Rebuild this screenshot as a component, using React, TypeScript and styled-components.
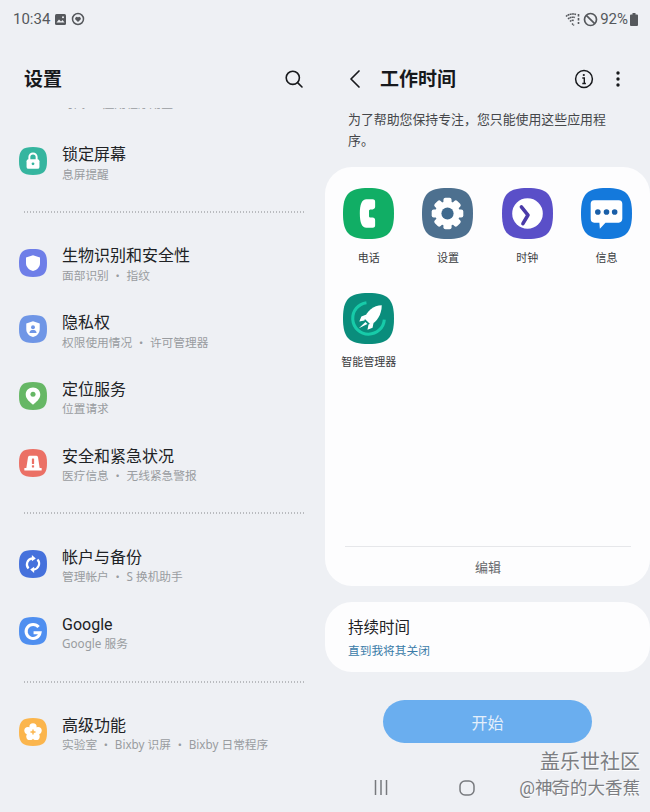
import React from "react";
import styled, { createGlobalStyle } from "styled-components";

const Global = createGlobalStyle`
  html, body { margin: 0; padding: 0; background: #eef0f4; }
  body { font-family: Roboto, "Noto Sans CJK SC", sans-serif; width: 650px; height: 812px; overflow: hidden; }
`;

const Screen = styled.div`
  position: relative;
  width: 650px;
  height: 812px;
  display: grid;
  grid-template-columns: 325px 325px;
  background: #eef0f4;
  overflow: hidden;
`;

const Pane = styled.section`
  display: flex;
  flex-direction: column;
  min-width: 0;
`;

const StatusBar = styled.div<{ $right?: boolean }>`
  height: 38px;
  box-sizing: border-box;
  display: flex;
  align-items: center;
  justify-content: ${(p) => (p.$right ? "flex-end" : "flex-start")};
  padding: 0 ${(p) => (p.$right ? "12px" : "0")} 0 ${(p) => (p.$right ? "0" : "13px")};
  gap: ${(p) => (p.$right ? "2px" : "4px")};
  color: #55585c;
  font-size: 15px;
  line-height: 20px;
`;

const Header = styled.header`
  height: 70px;
  display: flex;
  align-items: center;
  box-sizing: border-box;
  padding-top: 12px;
  position: relative;
`;

const LeftHeader = styled(Header)`
  padding-left: 24px;
  padding-right: 21px;
  justify-content: space-between;
`;

const RightHeader = styled(Header)`
  padding-left: 21px;
  padding-right: 30px;
`;

const Title = styled.h1`
  margin: 2px 0 0;
  font-size: 19px;
  line-height: 26px;
  font-weight: 700;
  color: #17191c;
`;

const PageTitle = styled(Title)`
  margin-left: 16px;
`;

const HeaderSpacer = styled.div`
  flex: 1;
`;

const IconGlyph = styled.svg<{ $ml?: number }>`
  display: block;
  flex: none;
  margin-left: ${(p) => p.$ml ?? 0}px;
`;

const ScrollList = styled.div`
  height: 704px;
  overflow: hidden;
  display: flex;
  flex-direction: column;
`;

const ClippedSub = styled.div`
  height: 20px;
  margin-top: -14px;
  padding-left: 62px;
  font-size: 11.7px;
  line-height: 20px;
  color: #999ca0;
  flex: none;
`;

const ListGap = styled.div`
  height: 14px;
  flex: none;
`;

const Row = styled.div`
  height: 66.7px;
  flex: none;
  display: flex;
  align-items: center;
  padding-left: 19px;
  gap: 15px;
`;

const RowText = styled.div`
  display: flex;
  flex-direction: column;
  padding-top: 6px;
`;

const RowTitle = styled.div`
  font-size: 16px;
  line-height: 20px;
  color: #202225;
`;

const RowSub = styled.div`
  font-family: "Noto Sans", "Noto Sans CJK SC", sans-serif;
  font-size: 11.7px;
  line-height: 20px;
  margin-top: -1.5px;
  color: #999ca0;
`;

const Divider = styled.div`
  height: 34.7px;
  flex: none;
  margin: 0 21px 0 24px;
  display: flex;
  align-items: center;
  &::before {
    content: "";
    flex: 1;
    height: 2px;
    background: repeating-linear-gradient(90deg, #b9bbbf 0 1.5px, transparent 1.5px 3px);
  }
`;

const Intro = styled.p`
  margin: 0;
  padding: 1px 40px 0 23px;
  height: 58px;
  font-size: 12.9px;
  line-height: 21px;
  color: #45474a;
`;

const Card = styled.div`
  background: #fdfdfe;
  border-radius: 27px;
`;

const AppsCard = styled(Card)`
  height: 419px;
  display: flex;
  flex-direction: column;
  box-sizing: border-box;
  padding-top: 21px;
`;

const AppGrid = styled.div`
  flex: 1;
  display: grid;
  grid-template-columns: repeat(4, 79.3px);
  grid-auto-rows: 104.5px;
  padding-left: 4px;
`;

const AppCell = styled.div`
  display: flex;
  flex-direction: column;
  align-items: center;
  gap: 11.5px;
`;

const AppLabel = styled.div`
  font-size: 11px;
  line-height: 16px;
  color: #3a3c3f;
  white-space: nowrap;
`;

const EditBar = styled.div`
  height: 39px;
  margin: 0 19px 0 20px;
  border-top: 1px solid #e6e7ea;
  display: flex;
  align-items: center;
  justify-content: center;
  font-size: 13px;
  color: #66686c;
`;

const DurationCard = styled(Card)`
  margin-top: 16px;
  height: 70px;
  box-sizing: border-box;
  padding: 15px 23px 0;
`;

const DurationTitle = styled.div`
  font-size: 15.5px;
  line-height: 22px;
  color: #202225;
`;

const DurationValue = styled.div`
  font-size: 11.7px;
  line-height: 18px;
  margin-top: 3px;
  color: #3a7ba8;
`;

const StartButton = styled.button`
  display: flex;
  align-items: center;
  justify-content: center;
  width: 209px;
  height: 43px;
  margin: 28px 0 0 58px;
  padding: 0;
  border: 0;
  border-radius: 22px;
  background: #6aaeef;
  color: #e4effb;
  font: inherit;
  font-size: 16px;
`;

const NavBar = styled.nav`
  flex: 1;
  position: relative;
  display: flex;
  align-items: flex-start;
  padding: 37px 0 0 49px;
  gap: 71px;
`;

const Watermark = styled.div`
  position: absolute;
  right: 10px;
  bottom: 11px;
  text-align: right;
  color: #7c7e82;
  text-shadow: 1px 1px 0 rgba(255, 255, 255, 0.85);
`;

const WatermarkBrand = styled.div`
  font-size: 20px;
  line-height: 26px;
`;

const WatermarkUser = styled.div`
  font-size: 17.5px;
  line-height: 26px;
`;

const SQ = "M50 0C88 0 100 12 100 50C100 88 88 100 50 100C12 100 0 88 0 50C0 12 12 0 50 0Z";

const Tile = ({ size, fill, children }: { size: number; fill: string; children: React.ReactNode }) => (
  <IconGlyph width={size} height={size} viewBox="0 0 100 100">
    <path d={SQ} fill={fill} />
    {children}
  </IconGlyph>
);

const LockIcon = () => (
  <Tile size={28} fill="#35b59f">
    <path d="M37 46V36a13 13 0 0 1 26 0v10" fill="none" stroke="#fff" strokeWidth="7" />
    <rect x="27" y="44" width="46" height="34" rx="7" fill="#fff" />
    <circle cx="50" cy="60" r="5" fill="#35b59f" />
  </Tile>
);

const ShieldIcon = () => (
  <Tile size={28} fill="#6e7ee8">
    <path d="M50 22l25 8v20c0 15-11 25-25 29-14-4-25-14-25-29V30z" fill="#fff" />
  </Tile>
);

const PrivacyIcon = () => (
  <Tile size={28} fill="#6f96e6">
    <path d="M50 22l24 8v20c0 15-10 25-24 29-14-4-24-14-24-29V30z" fill="#fff" />
    <circle cx="50" cy="44" r="7" fill="#6f96e6" />
    <path d="M37 64c1-8 7-10 13-10s12 2 13 10z" fill="#6f96e6" />
  </Tile>
);

const PinIcon = () => (
  <Tile size={28} fill="#66b765">
    <path d="M50 20c15 0 26 11 26 25 0 16-16 28-26 36-10-8-26-20-26-36 0-14 11-25 26-25z" fill="#fff" />
    <circle cx="50" cy="44" r="9" fill="#66b765" />
  </Tile>
);

const AlertIcon = () => (
  <Tile size={28} fill="#eb7065">
    <path d="M38 24h24c4 0 5 3 6 6l6 40H26l6-40c1-3 2-6 6-6z" fill="#fff" />
    <rect x="19" y="68" width="62" height="9" rx="2" fill="#fff" />
    <rect x="46" y="34" width="8" height="20" rx="2" fill="#eb7065" />
    <rect x="46" y="58" width="8" height="8" rx="2" fill="#eb7065" />
  </Tile>
);

const SyncIcon = () => (
  <Tile size={28} fill="#4571dc">
    <path d="M34 66c-11-12-6-33 14-36" fill="none" stroke="#fff" strokeWidth="8" />
    <path d="M46 18l14 12-14 10z" fill="#fff" />
    <path d="M66 34c11 12 6 33-14 36" fill="none" stroke="#fff" strokeWidth="8" />
    <path d="M54 82L40 70l14-10z" fill="#fff" />
  </Tile>
);

const GoogleIcon = () => (
  <Tile size={28} fill="#4f8ff0">
    <path d="M70 36a25 25 0 1 0 5 20H52" fill="none" stroke="#fff" strokeWidth="11" />
  </Tile>
);

const FlowerIcon = () => (
  <Tile size={28} fill="#fbb54c">
    <g fill="#fff">
      <circle cx="50" cy="32" r="13" />
      <circle cx="68" cy="45" r="13" />
      <circle cx="61" cy="66" r="13" />
      <circle cx="39" cy="66" r="13" />
      <circle cx="32" cy="45" r="13" />
      <circle cx="50" cy="50" r="15" />
    </g>
    <path d="M50 41v18M41 50h18" stroke="#fbb54c" strokeWidth="5" />
  </Tile>
);

const PhoneApp = () => (
  <Tile size={51} fill="#11ae65">
    <path
      d="M46 22h12c4 0 5 2 5 5v10c0 3-2 5-5 5h-3c-3 0-4 1-4 3v10c0 2 1 3 4 3h3c3 0 5 2 5 5v10c0 3-1 5-5 5H46c-9 0-13-10-13-28s4-28 13-28z"
      fill="#fff"
    />
  </Tile>
);

const gearTeeth = [0, 45, 90, 135, 180, 225, 270, 315];

const SettingsApp = () => (
  <Tile size={51} fill="#4d708f">
    <g fill="#fff">
      {gearTeeth.map((a) => (
        <rect key={a} x="42" y="19" width="16" height="16" rx="4" transform={`rotate(${a} 50 50)`} />
      ))}
      <circle cx="50" cy="50" r="24" />
    </g>
    <circle cx="50" cy="50" r="12" fill="#3f6a8e" />
  </Tile>
);

const ClockApp = () => (
  <Tile size={51} fill="#5a4fc8">
    <circle cx="50" cy="50" r="30" fill="#fff" />
    <path d="M38 37l13 16-10 17" fill="none" stroke="#4a3aa8" strokeWidth="7" strokeLinecap="round" strokeLinejoin="round" />
  </Tile>
);

const MessageApp = () => (
  <Tile size={51} fill="#1479dc">
    <path d="M26 24h48c5 0 7 3 7 7v29c0 5-3 8-7 8H48L37 80l-1-12H26c-5 0-7-3-7-8V31c0-4 2-7 7-7z" fill="#fff" />
    <g fill="#1a5fa8">
      <circle cx="33" cy="47" r="5.5" />
      <circle cx="50" cy="47" r="5.5" />
      <circle cx="66" cy="47" r="5.5" />
    </g>
  </Tile>
);

const CareApp = () => (
  <Tile size={51} fill="#0a8d7c">
    <path d="M81 52A31 31 0 1 1 46 19" fill="none" stroke="#17cba9" strokeWidth="6" />
    <path d="M76 24C60 24 46 36 42 50L54 62C66 58 76 42 76 24Z" fill="#fff" />
    <path d="M46 42L36 46L32 56L42 54ZM60 58L58 68L48 72L50 62Z" fill="#fff" />
    <path d="M31 69L44 57L48 61Z" fill="#fff" />
  </Tile>
);

const rows1 = [{ icon: <LockIcon />, title: "锁定屏幕", sub: "息屏提醒" }];
const rows2 = [
  { icon: <ShieldIcon />, title: "生物识别和安全性", sub: "面部识别 ・ 指纹" },
  { icon: <PrivacyIcon />, title: "隐私权", sub: "权限使用情况 ・ 许可管理器" },
  { icon: <PinIcon />, title: "定位服务", sub: "位置请求" },
  { icon: <AlertIcon />, title: "安全和紧急状况", sub: "医疗信息 ・ 无线紧急警报" },
];
const rows3 = [
  { icon: <SyncIcon />, title: "帐户与备份", sub: "管理帐户 ・ S 换机助手" },
  { icon: <GoogleIcon />, title: "Google", sub: "Google 服务" },
];
const rows4 = [{ icon: <FlowerIcon />, title: "高级功能", sub: "实验室 ・ Bixby 识屏 ・ Bixby 日常程序" }];

const apps = [
  { icon: <PhoneApp />, name: "电话" },
  { icon: <SettingsApp />, name: "设置" },
  { icon: <ClockApp />, name: "时钟" },
  { icon: <MessageApp />, name: "信息" },
  { icon: <CareApp />, name: "智能管理器" },
];

const renderRows = (rows: { icon: React.ReactNode; title: string; sub: string }[]) =>
  rows.map((r) => (
    <Row key={r.title}>
      {r.icon}
      <RowText>
        <RowTitle>{r.title}</RowTitle>
        <RowSub>{r.sub}</RowSub>
      </RowText>
    </Row>
  ));

export default function App() {
  return (
    <Screen>
      <Global />
      <Pane>
        <StatusBar>
          <span>10:34</span>
          <IconGlyph width="13" height="13" viewBox="0 0 13 13">
            <rect x="1" y="1" width="11" height="11" rx="1.5" fill="#55585c" />
            <path d="M2.500 9.500l2.500-3 2 2 1.500-1.500 2 2.500z" fill="#eef0f4" />
            <circle cx="9" cy="4.200" r="1" fill="#eef0f4" />
          </IconGlyph>
          <IconGlyph width="14" height="14" viewBox="0 0 14 14">
            <circle cx="7" cy="7" r="5.500" fill="none" stroke="#55585c" strokeWidth="1.500" />
            <path d="M7 10L4.200 7.200a1.700 1.700 0 0 1 2.800-1.800 1.700 1.700 0 0 1 2.800 1.800z" fill="#55585c" />
          </IconGlyph>
        </StatusBar>
        <LeftHeader>
          <Title>设置</Title>
          <IconGlyph width="20" height="20" viewBox="0 0 20 20">
            <circle cx="8.800" cy="8.800" r="6.600" fill="none" stroke="#17191c" strokeWidth="1.600" />
            <path d="M13.600 13.600L18 18" stroke="#17191c" strokeWidth="1.600" strokeLinecap="round" />
          </IconGlyph>
        </LeftHeader>
        <ScrollList>
          <ClippedSub>时间 ・ 应用程序用量</ClippedSub>
          <ListGap />
          {renderRows(rows1)}
          <Divider />
          {renderRows(rows2)}
          <Divider />
          {renderRows(rows3)}
          <Divider />
          {renderRows(rows4)}
        </ScrollList>
      </Pane>
      <Pane>
        <StatusBar $right>
          <IconGlyph width="16" height="14" viewBox="0 0 16 14">
            <path d="M1 4.500a10 10 0 0 1 10-2M3 7a7 7 0 0 1 7-1.500M5 9.500a4 4 0 0 1 4-1M7 11.500l2 2" fill="none" stroke="#55585c" strokeWidth="1.500" strokeDasharray="1.800 0.400" />
            <path d="M13.500 2v2.500M13.500 6v2.500M13.500 10v2" stroke="#55585c" strokeWidth="1.600" />
          </IconGlyph>
          <IconGlyph width="15" height="15" viewBox="0 0 15 15">
            <circle cx="7.500" cy="7.500" r="6" fill="none" stroke="#55585c" strokeWidth="1.700" />
            <path d="M3.300 3.300l8.400 8.400" stroke="#55585c" strokeWidth="1.700" />
          </IconGlyph>
          <span>92%</span>
          <IconGlyph width="8" height="13" viewBox="0 0 8 13">
            <path d="M2.500 0h3v1.500H7a1 1 0 0 1 1 1V12a1 1 0 0 1-1 1H1a1 1 0 0 1-1-1V2.500a1 1 0 0 1 1-1h1.500z" fill="#55585c" />
          </IconGlyph>
        </StatusBar>
        <RightHeader>
          <IconGlyph width="18" height="20" viewBox="0 0 18 20">
            <path d="M13 2L5 10l8 8" fill="none" stroke="#17191c" strokeWidth="1.700" strokeLinecap="round" strokeLinejoin="round" />
          </IconGlyph>
          <PageTitle>工作时间</PageTitle>
          <HeaderSpacer />
          <IconGlyph width="20" height="20" viewBox="0 0 20 20">
            <circle cx="10" cy="10" r="8.400" fill="none" stroke="#17191c" strokeWidth="1.500" />
            <path d="M8.300 9h2v5.200M8.300 14.500h3.600" fill="none" stroke="#17191c" strokeWidth="1.400" />
            <circle cx="9.800" cy="6" r="1.100" fill="#17191c" />
          </IconGlyph>
          <IconGlyph width="4" height="18" viewBox="0 0 4 18" $ml={22}>
            <circle cx="2" cy="3" r="1.700" fill="#17191c" />
            <circle cx="2" cy="9" r="1.700" fill="#17191c" />
            <circle cx="2" cy="15" r="1.700" fill="#17191c" />
          </IconGlyph>
        </RightHeader>
        <Intro>为了帮助您保持专注，您只能使用这些应用程序。</Intro>
        <AppsCard>
          <AppGrid>
            {apps.map((a) => (
              <AppCell key={a.name}>
                {a.icon}
                <AppLabel>{a.name}</AppLabel>
              </AppCell>
            ))}
          </AppGrid>
          <EditBar>编辑</EditBar>
        </AppsCard>
        <DurationCard>
          <DurationTitle>持续时间</DurationTitle>
          <DurationValue>直到我将其关闭</DurationValue>
        </DurationCard>
        <StartButton>开始</StartButton>
        <NavBar>
          <IconGlyph width="14" height="15" viewBox="0 0 14 15">
            <path d="M1.500 0v15M7 0v15M12.500 0v15" stroke="#77797d" strokeWidth="1.500" />
          </IconGlyph>
          <IconGlyph width="16" height="16" viewBox="0 0 16 16">
            <rect x="1" y="1" width="14" height="14" rx="5" fill="none" stroke="#77797d" strokeWidth="1.500" />
          </IconGlyph>
          <IconGlyph width="12" height="15" viewBox="0 0 12 15">
            <path d="M9 1L3 7.500 9 14" fill="none" stroke="#8b8d91" strokeWidth="1.500" />
          </IconGlyph>
          <Watermark>
            <WatermarkBrand>盖乐世社区</WatermarkBrand>
            <WatermarkUser>@神奇的大香蕉</WatermarkUser>
          </Watermark>
        </NavBar>
      </Pane>
    </Screen>
  );
}
